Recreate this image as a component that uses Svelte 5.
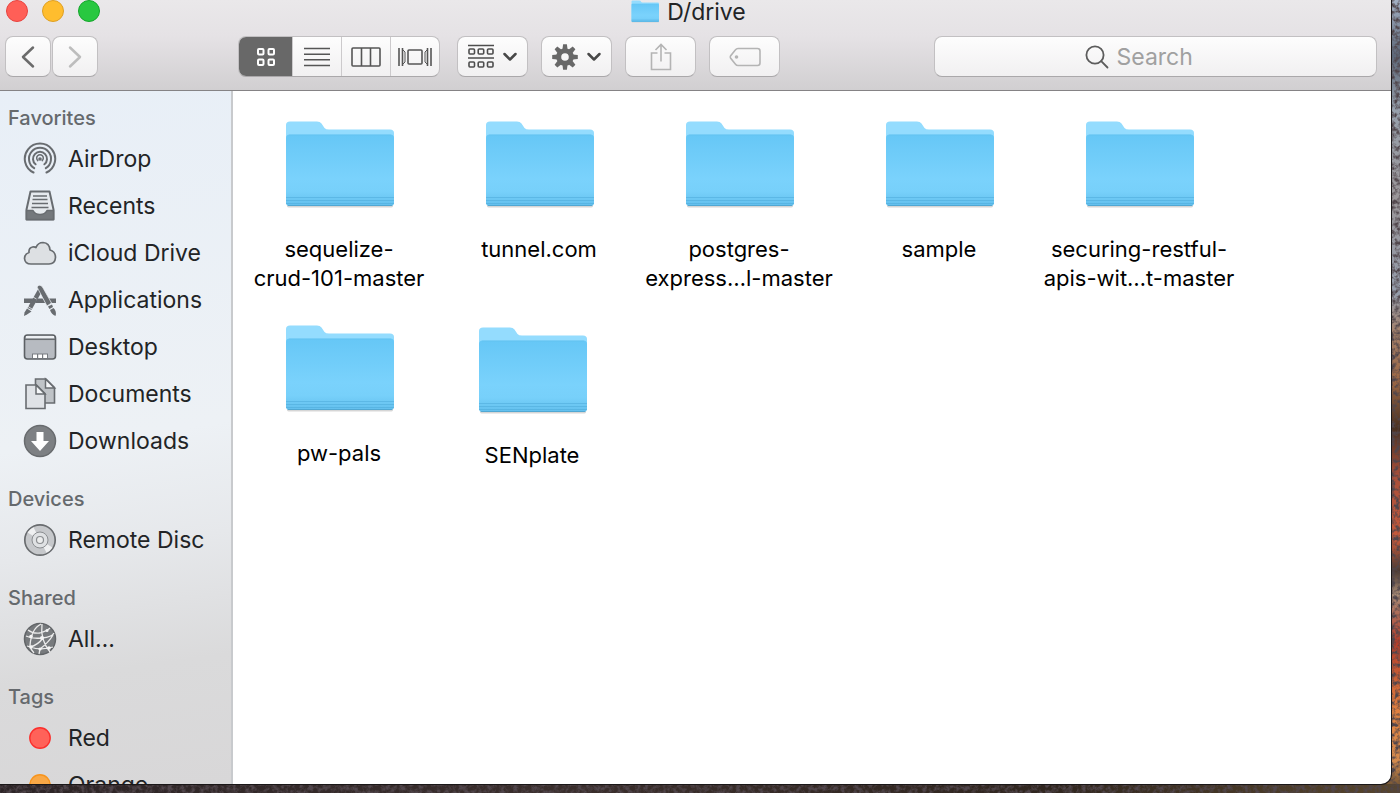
<script>
  const sections = [
    {
      title: 'Favorites',
      items: [
        { name: 'AirDrop', icon: 'airdrop' },
        { name: 'Recents', icon: 'recents' },
        { name: 'iCloud Drive', icon: 'cloud' },
        { name: 'Applications', icon: 'apps' },
        { name: 'Desktop', icon: 'desktop' },
        { name: 'Documents', icon: 'documents' },
        { name: 'Downloads', icon: 'downloads' }
      ]
    },
    { title: 'Devices', items: [{ name: 'Remote Disc', icon: 'disc' }] },
    { title: 'Shared', items: [{ name: 'All…', icon: 'network' }] },
    {
      title: 'Tags',
      items: [
        { name: 'Red', icon: 'tag', fill: '#ff6259', edge: '#fb2f2c' },
        { name: 'Orange', icon: 'tag', fill: '#f9a846', edge: '#f7941d' }
      ]
    }
  ];

  const folders = [
    { lines: ['sequelize-', 'crud-101-master'], x: 6, y: 29 },
    { lines: ['tunnel.com'], x: 206, y: 29 },
    { lines: ['postgres-', 'express…l-master'], x: 406, y: 29 },
    { lines: ['sample'], x: 606, y: 29 },
    { lines: ['securing-restful-', 'apis-wit…t-master'], x: 806, y: 29 },
    { lines: ['pw-pals'], x: 6, y: 233 },
    { lines: ['SENplate'], x: 199, y: 235 }
  ];

  const gearTeeth = [0, 45, 90, 135, 180, 225, 270, 315];

  let view = $state('icons');
  let query = $state('');
</script>

{#snippet folder()}
  <svg class="folder" viewBox="-1 0 110 90" aria-hidden="true">
    <defs>
      <linearGradient id="front" x1="0" y1="0" x2="0" y2="1">
        <stop offset="0" stop-color="#66c7f6" />
        <stop offset="0.62" stop-color="#7ad2fc" />
        <stop offset="0.8" stop-color="#77d0fa" />
        <stop offset="1" stop-color="#62bfed" />
      </linearGradient>
    </defs>
    <path d="M2 84V86Q2 87.500 5 87.500H105Q108 87.500 108 86V82Z" fill="#000" opacity=".16" />
    <path d="M1 5Q1 1.500 5 1.500H32Q35 1.500 36.500 3.500L39.500 8Q41 9.500 44 9.500H105Q109 9.500 109 13V84H1Z" fill="#94dcfe" />
    <path d="M1 18Q1 14.500 4.500 14.500H105.500Q109 14.500 109 18V82.500Q109 86 105.500 86H4.500Q1 86 1 82.500Z" fill="url(#front)" />
    <path d="M4 15H106" stroke="#5dbbe9" stroke-width="1" opacity=".35" />
    <path d="M1 77.500H109M1 80.500H109M1 83.500H109" stroke="#4ba9d8" stroke-width="1" opacity=".5" />
    <path d="M3 85.500H107" stroke="#4a9fc9" stroke-width="1" opacity=".7" />
  </svg>
{/snippet}

{#snippet chevron()}
  <svg width="16" height="12" viewBox="0 0 16 12" fill="none" stroke="#484848" stroke-width="2.500" stroke-linecap="round" stroke-linejoin="round" aria-hidden="true">
    <path d="M2.500 3L8 8.500L13.500 3" />
  </svg>
{/snippet}

{#snippet sideIcon(item)}
  <svg class="side-icon" viewBox="0 0 34 34" fill="none" aria-hidden="true">
    {#if item.icon === 'airdrop'}
      <g stroke="#686c70" stroke-width="2" stroke-linecap="round">
        <path d="M10.500 30.500A15.200 15.200 0 1 1 23.500 30.500" />
        <path d="M11.200 26.200A11 11 0 1 1 22.800 26.200" />
        <path d="M12.600 22.300A7 7 0 1 1 21.400 22.300" />
        <path d="M14.800 18.600A3.300 3.300 0 1 1 19.200 18.600" stroke-width="1.500" />
      </g>
      <circle cx="17" cy="17" r="1.800" fill="#686c70" />
    {:else if item.icon === 'recents'}
      <path d="M7.500 2.500H26.500L30.500 20.500V30.500H3.500V20.500Z" fill="#e6eaee" stroke="#686c70" stroke-width="2" stroke-linejoin="round" />
      <path d="M3.500 21.500H10Q12 25.500 17 25.500T24 21.500H30.500V30.500H3.500Z" fill="#74787c" stroke="#686c70" stroke-width="1.500" stroke-linejoin="round" />
      <path d="M10 7H24M9.500 10.500H24.500M9 14.500H25M8.500 18.500H25.500" stroke="#686c70" stroke-width="1.500" />
    {:else if item.icon === 'cloud'}
      <path d="M8 28Q2 28 1.500 22.500Q1.500 18 6 16.500Q5.500 12 9.500 11Q11.500 10.500 13 11.500Q15 6.500 20 6.500Q26.500 7 27 14Q32.500 15.500 32.500 21.500Q32 28 26 28Z" fill="#dde0e3" stroke="#686c70" stroke-width="1.700" stroke-linejoin="round" />
    {:else if item.icon === 'apps'}
      <path d="M1 15.500H10.500L8 20H1ZM14.500 15.500H20L22.500 20H12ZM23 15.500H33V20H25.500Z" fill="#686c70" />
      <path d="M18 5.500L6.500 26" stroke="#686c70" stroke-width="4.500" />
      <path d="M4 25.500L8.500 28.500L4 31.500L1 33L1.500 29.500Z" fill="#686c70" />
      <path d="M14 4Q16.500 .5 19.500 4L28.500 20L24 23Z" fill="#686c70" stroke="#edf1f5" stroke-width=".7" />
      <path d="M25 23.500L29 21.500L30 24L26.500 26ZM27 27L30.500 25Q34 28.500 32.500 33Q28.500 31.500 27 27Z" fill="#686c70" />
      <path d="M10 14L13.500 16M5 23.500L9 26" stroke="#edf1f5" stroke-width=".8" />
    {:else if item.icon === 'desktop'}
      <rect x="1.500" y="5" width="31" height="24" rx="3" fill="#b7bbc1" stroke="#5c6064" stroke-width="1.600" />
      <path d="M3 6H31V8.500H3Z" fill="#edf0f3" />
      <path d="M2 9.300H32" stroke="#686c70" stroke-width="1.500" />
      <path d="M9 23.500H25V28H9Z" fill="#777b80" />
      <path d="M10 24.500H14V28H10ZM15.200 24.500H19V28H15.200ZM20.200 24.500H24V28H20.200Z" fill="#fff" />
    {:else if item.icon === 'documents'}
      <path d="M12.500 2H23L31.500 10.500V26H12.500Z" fill="#bfc3c7" stroke="#686c70" stroke-width="1.600" />
      <path d="M22.500 2V11H31.500Z" fill="#f4f6f8" stroke="#686c70" stroke-width="1.500" />
      <path d="M3 8H13.500L22 16.500V31.500H3Z" fill="#dfe2e6" stroke="#686c70" stroke-width="1.600" />
      <path d="M13 8V17H22Z" fill="#f4f6f8" stroke="#686c70" stroke-width="1.500" />
    {:else if item.icon === 'downloads'}
      <circle cx="17" cy="17" r="15.500" fill="#7d8083" stroke="#686b6e" stroke-width="1.500" />
      <path d="M13.500 8H20.500V17H26L17 27L8 17H13.500Z" fill="#fff" />
    {:else if item.icon === 'disc'}
      <circle cx="17" cy="17" r="15.200" fill="#c6c8cb" stroke="#696c6f" stroke-width="1.700" />
      <path d="M17 17L4.500 9.500A14.300 14.300 0 0 1 10.500 4.200ZM17 17L29.500 24.500A14.300 14.300 0 0 1 23.500 29.800Z" fill="#eff0f1" />
      <circle cx="17" cy="17" r="8" fill="#dfe1e3" stroke="#8b8e91" />
      <circle cx="17" cy="17" r="3.500" fill="#eceded" stroke="#8b8e91" stroke-width="1.200" />
    {:else if item.icon === 'network'}
      <circle cx="17" cy="17" r="15.500" fill="#777a7d" stroke="#626568" stroke-width="1.500" />
      <g stroke="#ececec" stroke-width="1.300">
        <path d="M5 8Q10 12 17 11Q24 9 27 6M18 2Q8 7 7 24Q8 28 11 31M19 2Q17 18 27 30M3 14Q9 17 19 16T31 11M20 16Q15 23 7 25M4 24Q17 29 30 25M30 13Q26 20 17 27L16 32" />
      </g>
      <g fill="#f5f5f5">
        <circle cx="19" cy="16" r="2" /><circle cx="8" cy="14.500" r="1.800" /><circle cx="8" cy="25" r="1.800" /><circle cx="17" cy="27" r="1.600" /><circle cx="26" cy="26" r="1.800" /><circle cx="24" cy="8.500" r="1.500" />
      </g>
    {:else}
      <circle cx="17" cy="17" r="10.200" fill={item.fill} stroke={item.edge} stroke-width="1.400" />
    {/if}
  </svg>
{/snippet}

<div class="desktop">
  <svg class="grain" aria-hidden="true">
    <filter id="rock" x="0" y="0" width="100%" height="100%">
      <feTurbulence type="fractalNoise" baseFrequency="0.22" numOctaves="3" seed="8" />
      <feColorMatrix values="0 0 0 0 0.08  0 0 0 0 0.06  0 0 0 0 0.07  3 0 0 0 -1.200" />
    </filter>
    <rect width="100%" height="100%" filter="url(#rock)" />
  </svg>

  <div class="window">
    <header>
      <div class="titlebar">
        <div class="lights">
          <button class="light close" aria-label="Close"></button>
          <button class="light minimize" aria-label="Minimize"></button>
          <button class="light zoom" aria-label="Zoom"></button>
        </div>
        <h1>
          <span class="title-icon">{@render folder()}</span>
          D/drive
        </h1>
      </div>

      <div class="toolbar">
        <nav class="history" aria-label="History">
          <button class="btn" aria-label="Back">
            <svg width="24" height="26" viewBox="0 0 24 26" fill="none" stroke="#6b6b6b" stroke-width="2.500" stroke-linecap="round" stroke-linejoin="round">
              <path d="M17 3.500L7 13L17 22.500" />
            </svg>
          </button>
          <button class="btn" aria-label="Forward">
            <svg width="24" height="26" viewBox="0 0 24 26" fill="none" stroke="#bdbdbd" stroke-width="2.500" stroke-linecap="round" stroke-linejoin="round">
              <path d="M7 3.500L17 13L7 22.500" />
            </svg>
          </button>
        </nav>

        <div class="views" role="group" aria-label="View">
          <button class:active={view === 'icons'} aria-label="Icons" onclick={() => (view = 'icons')}>
            <svg width="20" height="20" viewBox="0 0 20 20" fill="none" stroke="currentColor" stroke-width="2">
              <rect x="2" y="2" width="5.500" height="5.500" rx="1" /><rect x="12.500" y="2" width="5.500" height="5.500" rx="1" />
              <rect x="2" y="12.500" width="5.500" height="5.500" rx="1" /><rect x="12.500" y="12.500" width="5.500" height="5.500" rx="1" />
            </svg>
          </button>
          <button class:active={view === 'list'} aria-label="List" onclick={() => (view = 'list')}>
            <svg width="26" height="20" viewBox="0 0 26 20" stroke="currentColor" stroke-width="1.500">
              <path d="M0 1.500H26M0 7.200H26M0 12.800H26M0 18.500H26" />
            </svg>
          </button>
          <button class:active={view === 'columns'} aria-label="Columns" onclick={() => (view = 'columns')}>
            <svg width="30" height="20" viewBox="0 0 30 20" fill="none" stroke="currentColor" stroke-width="1.600">
              <rect x="1" y="1" width="28" height="18" rx="1" /><path d="M10.500 1V19M19.500 1V19" />
            </svg>
          </button>
          <button class:active={view === 'gallery'} aria-label="Cover Flow" onclick={() => (view = 'gallery')}>
            <svg width="34" height="20" viewBox="0 0 34 20" fill="none" stroke="currentColor" stroke-width="1.600">
              <rect x="10" y="3" width="14" height="14" rx="1" />
              <path d="M1 1V19M4.500 1V19M33 1V19M29.500 1V19" /><path d="M5 3L7 5V15L5 17M29 3L27 5V15L29 17" stroke-width="1" />
            </svg>
          </button>
        </div>

        <div class="actions">
          <button class="btn wide" aria-label="Arrange by">
            <svg width="28" height="26" viewBox="0 0 28 26" fill="none" stroke="#4d4d4d" stroke-width="1.600">
              <path d="M1 1.500H27M1 14H27" />
              <rect x="2" y="5" width="5.500" height="5" rx="1" /><rect x="11.200" y="5" width="5.500" height="5" rx="1" /><rect x="20.500" y="5" width="5.500" height="5" rx="1" />
              <rect x="2" y="18" width="5.500" height="5" rx="1" /><rect x="11.200" y="18" width="5.500" height="5" rx="1" /><rect x="20.500" y="18" width="5.500" height="5" rx="1" />
            </svg>
            {@render chevron()}
          </button>
          <button class="btn wide" aria-label="Action">
            <svg width="28" height="26" viewBox="-14 -13 28 26" aria-hidden="true">
              <circle r="6.300" fill="none" stroke="#686868" stroke-width="5" />
              {#each gearTeeth as angle}
                <path d="M-2.600 -7.500L-1.900 -12.800H1.900L2.600 -7.500Z" fill="#686868" transform="rotate({angle})" />
              {/each}
            </svg>
            {@render chevron()}
          </button>
          <button class="btn wide" aria-label="Share">
            <svg width="22" height="28" viewBox="0 0 22 28" fill="none" stroke="#b4b4b4" stroke-width="1.600">
              <path d="M7.500 10H1.500V26.500H20.500V10H14.500M11 18.500V1.500M5.500 7L11 1.500L16.500 7" />
            </svg>
          </button>
          <button class="btn wide" aria-label="Edit Tags">
            <svg width="32" height="20" viewBox="0 0 32 20" fill="none" stroke="#b4b4b4" stroke-width="1.600">
              <path d="M9 1.500H28.500Q31 1.500 31 4V16Q31 18.500 28.500 18.500H9Q7.500 18.500 6.500 17.200L1.500 11Q1 10 1.500 9L6.500 2.800Q7.500 1.500 9 1.500Z" />
              <circle cx="7.500" cy="10" r="1.800" fill="#b4b4b4" stroke="none" />
            </svg>
          </button>
        </div>

        <label class="search">
          <svg width="24" height="24" viewBox="0 0 24 24" fill="none" stroke="#5c5c5c" stroke-width="1.800" stroke-linecap="round" aria-hidden="true">
            <circle cx="10" cy="10" r="8.600" /><path d="M16.200 16.200L22.500 22.500" />
          </svg>
          <input type="text" placeholder="Search" aria-label="Search" bind:value={query} />
        </label>
      </div>
    </header>

    <div class="body">
      <aside>
        {#each sections as section}
          <section>
            <h2>{section.title}</h2>
            <ul>
              {#each section.items as item}
                <li><a href="#{item.icon}">{@render sideIcon(item)}<span>{item.name}</span></a></li>
              {/each}
            </ul>
          </section>
        {/each}
      </aside>

      <main>
        {#each folders as item}
          <button class="file" style="left: {item.x}px; top: {item.y}px">
            {@render folder()}
            <span class="name">
              {#each item.lines as line}<span>{line}</span>{/each}
            </span>
          </button>
        {/each}
      </main>
    </div>
  </div>
</div>

<style>
  :global(body) {
    margin: 0;
    overflow: hidden;
  }

  .desktop {
    position: relative;
    box-sizing: border-box;
    height: 100vh;
    padding: 0 9px 9px 0;
    overflow: hidden;
    font-family: Inter, Roboto, sans-serif;
    color: #222426;
    background:
      linear-gradient(90deg, #2c2426, #3a2e2c 40%, #30261f 75%, #57452c) bottom / 100% 9px no-repeat,
      linear-gradient(#a3b0c4, #5c6778 7%, #97a0ac 14%, #9a9699 25%, #949cab 37%, #a58069 42%, #9c6744 48%, #4a3020 54%, #a84f3a 60%, #c75a3b 68%, #4d3a32 72%, #a88b75 75%, #b53c29 81%, #e28240 90%, #d38a4d 96%, #57452c);
  }

  .grain {
    position: absolute;
    inset: 0;
    width: 100%;
    height: 100%;
  }

  button {
    margin: 0;
    padding: 0;
    border: 0;
    font: inherit;
    color: inherit;
    background: none;
  }

  .window {
    position: relative;
    display: flex;
    flex-direction: column;
    height: 100%;
    overflow: hidden;
    border-radius: 0 0 10px 0;
    background: #fff;
    box-shadow: 0 0 0 1px #1a1718;
  }

  header {
    flex: none;
    border-bottom: 1px solid #858385;
    background: linear-gradient(#eae8ea, #e5e2e5 40%, #d1cfd1);
  }

  .titlebar {
    display: grid;
    grid-template-columns: 1fr auto 1fr;
    height: 36px;
    padding: 0 20px 0 6px;
  }

  .lights {
    display: flex;
    gap: 14px;
  }

  .light {
    box-sizing: border-box;
    width: 22px;
    height: 22px;
    border: 1px solid;
    border-radius: 50%;
  }

  .close { background: #ff5f57; border-color: #e8433f; }
  .minimize { background: #ffbd2e; border-color: #dfa023; }
  .zoom { background: #28c840; border-color: #14a62b; }

  h1 {
    display: flex;
    gap: 8px;
    margin: 0;
    font-size: 23px;
    font-weight: 400;
    line-height: 24px;
  }

  .title-icon {
    width: 28px;
  }

  .title-icon .folder {
    width: 28px;
    height: 23px;
  }

  .toolbar {
    display: flex;
    align-items: center;
    padding: 0 14px 13px 5px;
  }

  .history {
    display: flex;
    gap: 1px;
  }

  .btn,
  .views,
  .search {
    box-sizing: border-box;
    height: 41px;
    border: 1px solid #c2c0c2;
    border-bottom-color: #aaa8aa;
    border-radius: 8px;
    background: linear-gradient(#fdfdfd, #f1f0f1);
  }

  .btn {
    display: flex;
    align-items: center;
    justify-content: center;
    gap: 7px;
    width: 46px;
  }

  .wide {
    width: 71px;
  }

  .views {
    display: flex;
    width: 202px;
    margin-left: 140px;
    overflow: hidden;
  }

  .views button {
    display: flex;
    flex: 1;
    align-items: center;
    justify-content: center;
    border-left: 1px solid #cccacc;
    color: #555;
  }

  .views button:first-child {
    flex: 0 0 53px;
    border-left: 0;
  }

  .views .active {
    color: #fff;
    background: #686868;
  }

  .actions {
    display: flex;
    gap: 13px;
    margin-left: 17px;
  }

  .search {
    display: flex;
    flex: 1;
    align-items: center;
    justify-content: center;
    gap: 8px;
    margin-left: 154px;
  }

  .search input {
    width: 110px;
    padding: 0;
    border: 0;
    outline: 0;
    font: inherit;
    font-size: 23px;
    color: #333;
    background: none;
  }

  .search input::placeholder {
    color: #a0a0a0;
    opacity: 1;
  }

  .body {
    display: flex;
    flex: 1;
    min-height: 0;
  }

  aside {
    box-sizing: border-box;
    flex: 0 0 233px;
    padding: 10px 0 0 8px;
    overflow: hidden;
    border-right: 2px solid #c8cacd;
    background: linear-gradient(172deg, #e8eff7, #edf1f5 50%, #e6e8eb 65%, #dadadb 82%, #d8d7d8);
  }

  section + section {
    margin-top: 18px;
  }

  h2 {
    margin: 0;
    font-size: 20px;
    font-weight: 500;
    line-height: 34px;
    color: #65696d;
  }

  ul {
    margin: 0;
    padding: 0;
    list-style: none;
  }

  li a {
    display: flex;
    align-items: center;
    gap: 11px;
    height: 47px;
    padding-left: 15px;
    font-size: 23px;
    color: inherit;
    text-decoration: none;
  }

  .side-icon {
    flex: none;
    width: 34px;
    height: 34px;
  }

  main {
    position: relative;
    flex: 1;
    overflow: hidden;
  }

  .file {
    position: absolute;
    display: flex;
    flex-direction: column;
    align-items: center;
    gap: 25px;
    width: 200px;
    color: #000;
    font-size: 22px;
    line-height: 29px;
  }

  .folder {
    display: block;
    width: 110px;
    height: 90px;
  }

  .name {
    display: flex;
    flex-direction: column;
    align-items: center;
    white-space: nowrap;
  }
</style>
